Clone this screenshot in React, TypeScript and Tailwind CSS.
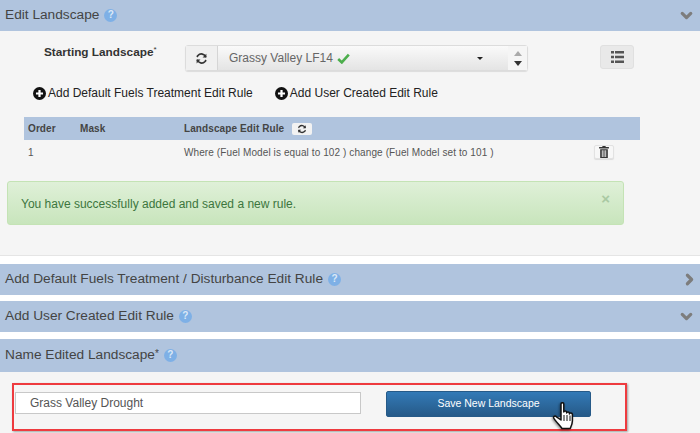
import React from 'react';
import { ChevronDown, ChevronRight } from 'lucide-react';

function Help() {
  return (
    <span className="ml-[5px] inline-flex h-[13px] w-[13px] items-center justify-center rounded-full bg-[#7eb0e6] text-[10px] font-bold leading-none text-[#dbe8f6]">
      ?
    </span>
  );
}

function Refresh({ size = 13 }: { size?: number }) {
  return (
    <svg width={size} height={size} viewBox="0 0 24 24" fill="none" stroke="#333" strokeWidth="3.2">
      <path d="M20 9.5A8.5 8.5 0 0 0 5.5 6.5L3.5 9" />
      <path d="M4 14.5A8.5 8.5 0 0 0 18.5 17.5L20.5 15" />
      <path d="M21 3v7h-7z" fill="#333" stroke="none" />
      <path d="M3 21v-7h7z" fill="#333" stroke="none" />
    </svg>
  );
}

function PlusCircle() {
  return (
    <svg width="13" height="13" viewBox="0 0 14 14" className="shrink-0">
      <circle cx="7" cy="7" r="7" fill="#111" />
      <path d="M7 3.2v7.6M3.2 7h7.6" stroke="#fff" strokeWidth="2.4" />
    </svg>
  );
}

function Bar({ title, h, icon, required }: { title: string; h: string; icon: React.ReactNode; required?: boolean }) {
  return (
    <div className={`flex items-center justify-between bg-[#b0c4de] pl-[5px] pr-[5px] ${h}`}>
      <div className="flex items-center text-[13.7px] text-[#444]">
        {title}
        {required && <span className="mt-[-4px] text-[10px]">*</span>}
        <Help />
      </div>
      {icon}
    </div>
  );
}

const chevDown = <ChevronDown size={17} strokeWidth={4.5} className="text-[#7d7d7d]" />;

export default function App() {
  return (
    <div className="relative h-[433px] w-[700px] overflow-hidden bg-white font-['Liberation_Sans',Arial,sans-serif]">
      <Bar title="Edit Landscape" h="h-[31px]" icon={chevDown} />

      <div className="h-[225px] border-b border-[#e5e5e5] bg-[#f5f5f5] pt-[14px]">
        <div className="flex items-start">
          <div className="ml-[44px] mt-[-1px] w-[141px] text-[11.8px] font-bold text-[#333]">
            Starting Landscape<span className="align-top text-[8px] font-normal">*</span>
          </div>
          <div className="flex h-[26px] w-[343px] rounded-[3px] border border-[#dcdcdc] shadow-[0_1px_1px_rgba(0,0,0,0.1)]">
            <div className="flex w-[32px] items-center justify-center border-r border-[#d5d5d5] bg-[#f0f0f0]">
              <Refresh />
            </div>
            <div className="flex flex-1 items-center justify-between bg-gradient-to-b from-[#fafafa] to-[#e4e4e4] pl-[11px] pr-[25px]">
              <span className="flex items-center gap-[4px] text-[12px] text-[#666]">
                Grassy Valley LF14
                <svg width="13" height="11" viewBox="0 0 13 11">
                  <path d="M1.2 6l3.6 3.4L11.8 1.6" fill="none" stroke="#4cae4c" strokeWidth="2.6" />
                </svg>
              </span>
              <span className="h-0 w-0 border-x-[3px] border-t-[3px] border-x-transparent border-t-[#222]" />
            </div>
            <div className="flex w-[19px] flex-col items-center justify-center gap-[5px] bg-[#f5f5f5]">
              <span className="h-0 w-0 border-x-[4px] border-b-[5px] border-x-transparent border-b-[#aaa]" />
              <span className="h-0 w-0 border-x-[4px] border-t-[5px] border-x-transparent border-t-[#333]" />
            </div>
          </div>
          <div className="ml-[72px] flex h-[24px] w-[34px] items-center justify-center rounded-[3px] border border-[#e0e0e0] bg-[#e9e9e9]">
            <svg width="13" height="12" viewBox="0 0 13 12" fill="#555">
              <path d="M0 0h3v2.6H0zM4 0h9v2.6H4zM0 4.7h3v2.6H0zM4 4.7h9v2.6H4zM0 9.4h3V12H0zM4 9.4h9V12H4z" />
            </svg>
          </div>
        </div>

        <div className="mt-[13px] flex items-center pl-[33px] text-[12px] text-[#222]">
          <PlusCircle />
          <span className="ml-[2px]">Add Default Fuels Treatment Edit Rule</span>
          <span className="ml-[22px]">
            <PlusCircle />
          </span>
          <span className="ml-[2px]">Add User Created Edit Rule</span>
        </div>

        <div className="ml-[24px] mt-[15px] w-[616px]">
          <div className="flex h-[23px] items-center bg-[#b0c4de] pl-[4px] text-[10px] font-bold tracking-[0.1px] text-[#444]">
            <span className="w-[52px]">Order</span>
            <span className="w-[104px]">Mask</span>
            <span>Landscape Edit Rule</span>
            <span className="ml-[8px] flex h-[12px] w-[20px] items-center justify-center rounded-[2px] bg-[#f2f2f2]">
              <Refresh size={10} />
            </span>
          </div>
          <div className="flex h-[24px] items-center pl-[4px] text-[10px] tracking-[0.1px] text-[#555]">
            <span className="w-[156px]">1</span>
            <span className="w-[410px]">Where (Fuel Model is equal to 102 ) change (Fuel Model set to 101 )</span>
            <span className="flex h-[14px] w-[20px] items-center justify-center rounded-[2px] border border-[#e2e2e2] bg-[#f7f7f7] shadow-[0_1px_1px_rgba(0,0,0,0.1)]">
              <svg width="10" height="12" viewBox="0 0 9 11" fill="#333">
                <path d="M3 0h3v1h3v1.4H0V1h3zM1 3h7v8H1zM2.5 4v6h.8V4zM4.1 4v6h.8V4zM5.7 4v6h.8V4z" fillRule="evenodd" />
              </svg>
            </span>
          </div>
        </div>

        <div className="ml-[7px] mt-[17px] flex h-[44px] w-[617px] items-start justify-between rounded-[3px] border border-[#c4e3b5] bg-gradient-to-b from-[#dff0d8] to-[#c8e5bc] pl-[13px] pr-[13px] pt-[13px] text-[12px] text-[#3c763d]">
          <span>You have successfully added and saved a new rule.</span>
          <span className="mt-[-4px] text-[15px] font-bold leading-[15px] text-[#a9c9a3]">×</span>
        </div>
      </div>

      <div className="mt-[8px]">
        <Bar title="Add Default Fuels Treatment / Disturbance Edit Rule" h="h-[31px]" icon={<ChevronRight size={17} strokeWidth={4.5} className="-mr-[3px] text-[#7d7d7d]" />} />
      </div>
      <div className="mt-[6px]">
        <Bar title="Add User Created Edit Rule" h="h-[31px]" icon={chevDown} />
      </div>
      <div className="mt-[7px]">
        <Bar title="Name Edited Landscape" required h="h-[33px]" icon={null} />
      </div>

      <div className="flex h-[61px] items-start bg-[#f5f5f5] pl-[15px] pt-[20px]">
        <input
          readOnly
          value="Grass Valley Drought"
          className="h-[22px] w-[346px] border border-[#c8c8c8] bg-white pl-[14px] text-[12px] text-[#555] outline-none"
        />
        <button className="ml-[25px] mt-[-1px] h-[26px] w-[205px] rounded-[2px] border border-[#265a88] bg-gradient-to-b from-[#337ab7] to-[#265a88] text-[10.5px] text-white">
          Save New Landscape
        </button>
      </div>

      {/* annotation box drawn over the form */}
      <div className="absolute left-[12px] top-[383px] h-[48px] w-[615px] border-[2px] border-[#ee3b3f] shadow-[1px_1px_2px_rgba(0,0,0,0.35)]" />

      {/* mouse pointer */}
      <svg className="absolute left-[552px] top-[402px] drop-shadow-[-1px_1px_1px_rgba(0,0,0,0.4)]" width="25" height="28" viewBox="0 0 25 28">
        <path
          d="M9 2c0-1.7 2.8-1.7 2.8 0v8c.2-1.4 2.6-1.4 2.8 0v1c.2-1.4 2.6-1.4 2.8 0v1c.2-1.3 2.8-1.2 3 .3V19c0 3-1 5-2.2 7.5H10C8.5 24 3 19 1.7 16c-.6-1.6 1.5-2.6 2.8-1.2L9 18z"
          fill="#fff"
          stroke="#111"
          strokeWidth="1.5"
          strokeLinejoin="round"
        />
        <path d="M12 13v6M15 13v6M18 13.5v5.5" stroke="#111" strokeWidth="1" />
      </svg>
    </div>
  );
}
